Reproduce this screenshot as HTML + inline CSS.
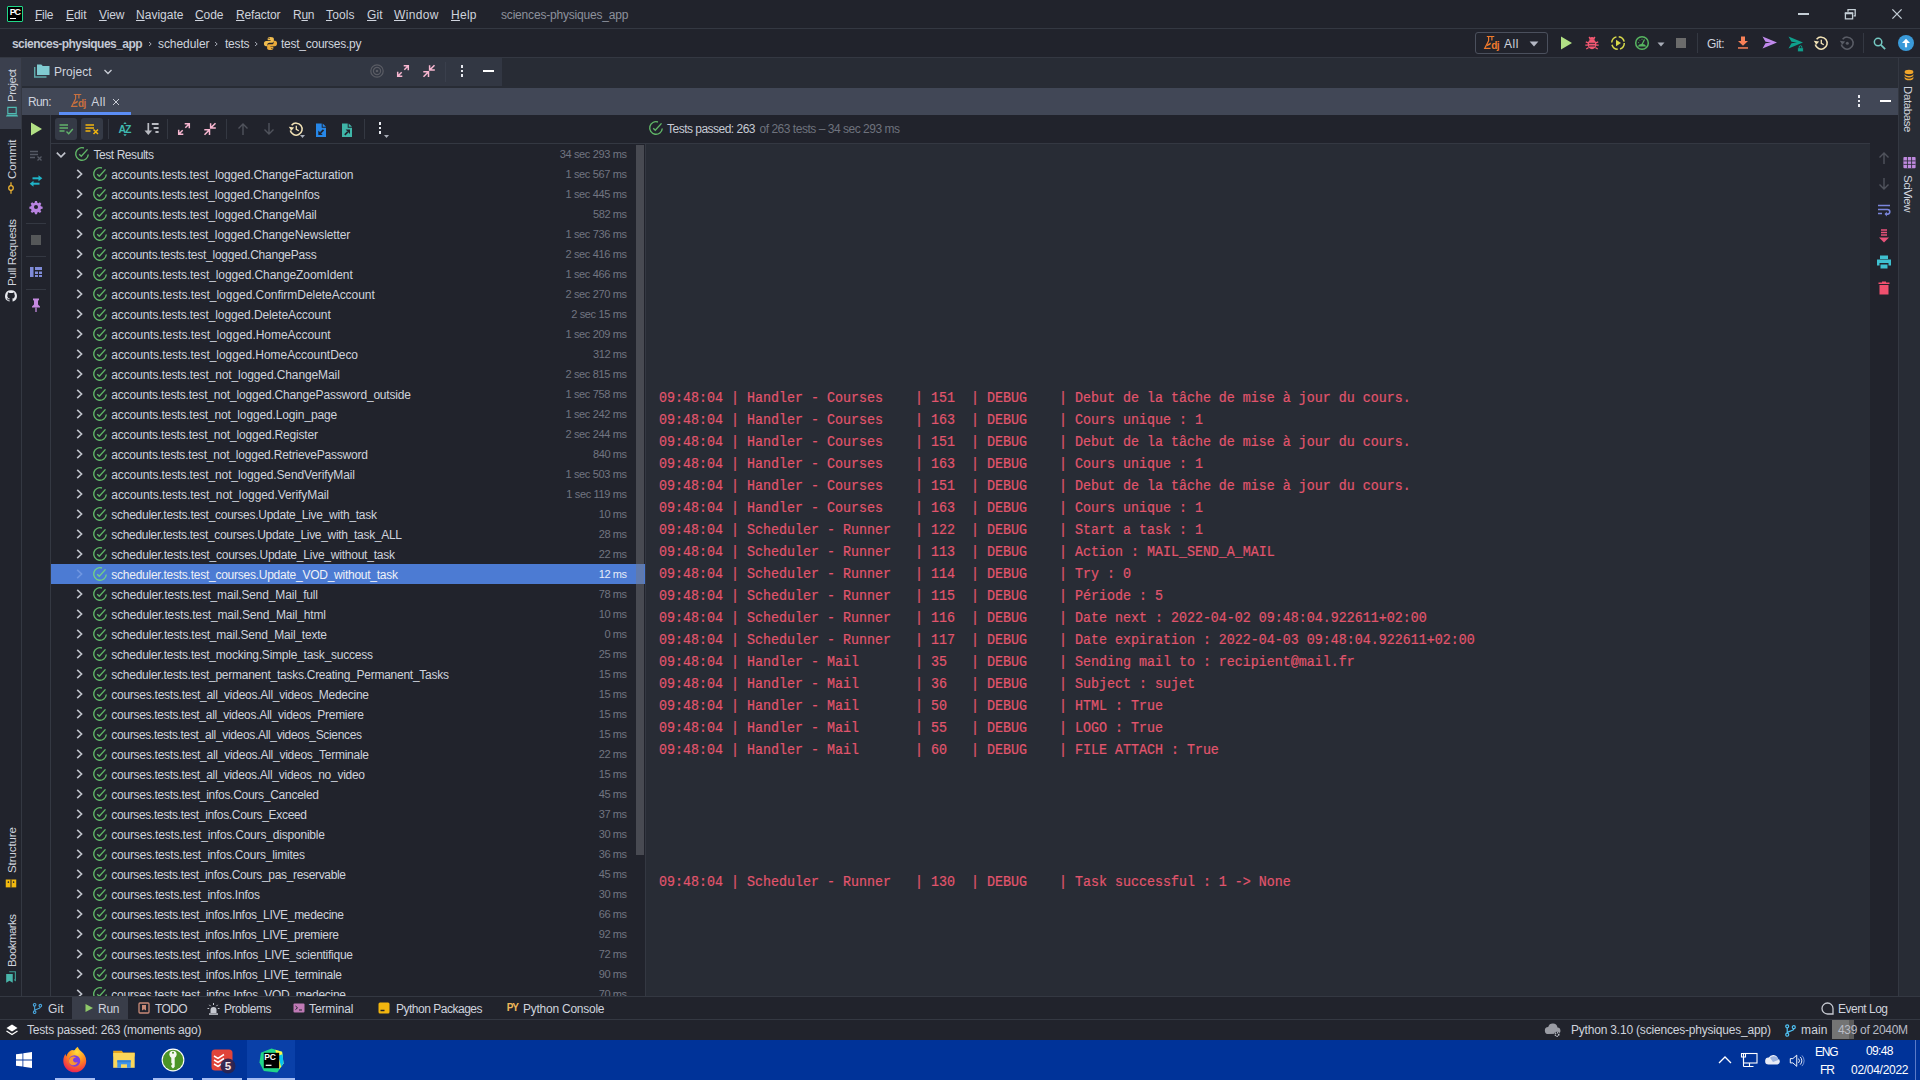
<!DOCTYPE html>
<html lang="en"><head><meta charset="utf-8"><title>sciences-physiques_app</title>
<style>
html,body{margin:0;padding:0;}
body{width:1920px;height:1080px;overflow:hidden;background:#21232c;position:relative;font-family:'Liberation Sans', sans-serif;font-size:12px;}
.t{position:absolute;white-space:pre;line-height:20px;height:20px;}
svg{overflow:visible;}
</style></head>
<body>
<div style="position:absolute;left:0px;top:0px;width:1920px;height:28px;background:#21232c;"></div>
<div style="position:absolute;left:0px;top:28px;width:1920px;height:1px;background:#343842;"></div>
<div style="position:absolute;left:7px;top:6px;width:16px;height:16px;box-sizing:border-box;border:1px solid #21d789;background:#000;border-radius:1px;"></div>
<span class="t" style="top:2.30px;font-size:9px;color:#ffffff;left:9.70px;font-weight:700;letter-spacing:-1.200px;">PC</span>
<div style="position:absolute;left:10px;top:18px;width:5.8px;height:1.1px;background:#ffffff;"></div>
<span class="t" style="top:5.20px;font-size:12px;color:#cfd3dd;left:35.00px;letter-spacing:-0.279px;"><u>F</u>ile</span>
<span class="t" style="top:5.20px;font-size:12px;color:#cfd3dd;left:66.00px;letter-spacing:-0.059px;"><u>E</u>dit</span>
<span class="t" style="top:5.20px;font-size:12px;color:#cfd3dd;left:99.00px;letter-spacing:-0.098px;"><u>V</u>iew</span>
<span class="t" style="top:5.20px;font-size:12px;color:#cfd3dd;left:136.00px;letter-spacing:0.020px;"><u>N</u>avigate</span>
<span class="t" style="top:5.20px;font-size:12px;color:#cfd3dd;left:195.00px;letter-spacing:-0.062px;"><u>C</u>ode</span>
<span class="t" style="top:5.20px;font-size:12px;color:#cfd3dd;left:236.00px;letter-spacing:-0.122px;"><u>R</u>efactor</span>
<span class="t" style="top:5.20px;font-size:12px;color:#cfd3dd;left:293.00px;letter-spacing:-0.257px;">R<u>u</u>n</span>
<span class="t" style="top:5.20px;font-size:12px;color:#cfd3dd;left:326.00px;letter-spacing:0.122px;"><u>T</u>ools</span>
<span class="t" style="top:5.20px;font-size:12px;color:#cfd3dd;left:367.00px;letter-spacing:0.083px;"><u>G</u>it</span>
<span class="t" style="top:5.20px;font-size:12px;color:#cfd3dd;left:394.00px;letter-spacing:0.364px;"><u>W</u>indow</span>
<span class="t" style="top:5.20px;font-size:12px;color:#cfd3dd;left:451.00px;letter-spacing:0.273px;"><u>H</u>elp</span>
<span class="t" style="top:5.20px;font-size:12px;color:#8d919c;left:501.00px;letter-spacing:-0.186px;">sciences-physiques_app</span>
<div style="position:absolute;left:1797.5px;top:12.7px;width:11px;height:2.6px;background:#c4ced6;"></div>
<svg style="position:absolute;left:1844px;top:8px;" width="12" height="12" viewBox="0 0 12 12"><path d="M1.400 5.500h7.200v5.400H1.400zM1.400 5.200h7.200" fill="none" stroke="#c4ced6" stroke-width="1.300"/><path d="M0.800 4.300h8.400v1.600H0.800z" fill="#c4ced6"/><path d="M4 3.800V1.600h7.200v6.200H9.600" fill="none" stroke="#c4ced6" stroke-width="1.300"/></svg>
<svg style="position:absolute;left:1891px;top:8px;" width="12" height="12" viewBox="0 0 12 12"><path d="M1.400 1.400l9.200 9.200M10.600 1.400L1.400 10.600" fill="none" stroke="#c4ced6" stroke-width="1.300"/></svg>
<div style="position:absolute;left:0px;top:29px;width:1920px;height:28px;background:#21232c;"></div>
<div style="position:absolute;left:0px;top:57px;width:1920px;height:1px;background:#343842;"></div>
<span class="t" style="top:34.40px;font-size:12px;color:#c3c8d4;left:12.00px;font-weight:700;letter-spacing:-0.551px;">sciences-physiques_app</span>
<svg style="position:absolute;left:145.5px;top:39.8px;" width="8" height="8" viewBox="0 0 8 8"><path d="M3 2L5.200 4L3 6" fill="none" stroke="#a4a8b3" stroke-width="1"/></svg>
<span class="t" style="top:34.40px;font-size:12px;color:#cfd3dd;left:158.00px;letter-spacing:-0.066px;">scheduler</span>
<svg style="position:absolute;left:211.5px;top:39.8px;" width="8" height="8" viewBox="0 0 8 8"><path d="M3 2L5.200 4L3 6" fill="none" stroke="#a4a8b3" stroke-width="1"/></svg>
<span class="t" style="top:34.40px;font-size:12px;color:#cfd3dd;left:225.00px;letter-spacing:-0.210px;">tests</span>
<svg style="position:absolute;left:251.5px;top:39.8px;" width="8" height="8" viewBox="0 0 8 8"><path d="M3 2L5.200 4L3 6" fill="none" stroke="#a4a8b3" stroke-width="1"/></svg>
<svg style="position:absolute;left:262.5px;top:35.5px;" width="15" height="15" viewBox="0 0 16 16"><path d="M7.9 1C5.9 1 5 1.8 5 3v1.6h3.1v.6H3.4C2 5.2 1 6.2 1 8s.9 2.9 2.2 2.9H4.6V9.2c0-1.2 1-2.1 2.2-2.1h3c1 0 1.8-.8 1.8-1.8V3c0-1.1-.9-2-3.7-2zM6.5 2a.6.6 0 110 1.3.6.6 0 010-1.300z" fill="#f1bd4f"/><path d="M8.100 15c2 0 2.900-.8 2.900-2v-1.600H7.900v-.6h4.700c1.400 0 2.400-1 2.400-2.800s-.9-2.900-2.200-2.900h-1.400v1.700c0 1.200-1 2.100-2.200 2.100h-3c-1 0-1.800.8-1.800 1.800V13c0 1.100.9 2 3.700 2zm1.400-1a.6.6 0 110-1.300.6.6 0 010 1.300z" fill="#e8a93a"/></svg>
<span class="t" style="top:34.40px;font-size:12px;color:#cfd3dd;left:281.00px;letter-spacing:-0.253px;">test_courses.py</span>
<div style="position:absolute;left:1475px;top:32px;width:73px;height:22px;box-sizing:border-box;border:1px solid #4b505d;border-radius:3px;"></div>
<svg style="position:absolute;left:1484px;top:35px;" width="12" height="16" viewBox="0 0 12 16"><path d="M2.800 1.500H10.300M4.600 1.500V5.800L0.700 13.300H6.600M7.900 1.500V5.600" fill="none" stroke="#f07a2c" stroke-width="1.200"/><path d="M3.300 9.200L7.200 7.600L6.300 9.800L2.300 11.600z" fill="#f07a2c"/></svg>
<span class="t" style="top:35.60px;font-size:10px;color:#f07a2c;left:1491.30px;font-weight:700;letter-spacing:-0.687px;">dj</span>
<span class="t" style="top:34.40px;font-size:12px;color:#cfd3dd;left:1504.00px;letter-spacing:0.582px;">All</span>
<svg style="position:absolute;left:1529px;top:38.5px;" width="10" height="10" viewBox="0 0 10 10"><path d="M0.600 2.500h8.800L5 7.500z" fill="#b4b8c4"/></svg>
<svg style="position:absolute;left:1558px;top:35px;" width="16" height="16" viewBox="0 0 16 16"><path d="M3 1.500L14 8L3 14.500z" fill="#b2e085"/></svg>
<svg style="position:absolute;left:1584px;top:35px;" width="16" height="16" viewBox="0 0 16 16"><ellipse cx="8" cy="9.300" rx="4.300" ry="5" fill="#f45872"/><path d="M5.300 4.800a2.700 2.700 0 015.400 0z" fill="#f45872"/><path d="M5 2l1.500 1.800M11 2L9.500 3.800M1.800 6.800l2.500 1M14.200 6.800l-2.500 1M1.300 10.200h2.700M14.700 10.200H12M2.300 14l2.300-1.500M13.700 14l-2.300-1.500" stroke="#f45872" stroke-width="1.300" fill="none"/><path d="M5 8.300h6M5 11h6" stroke="#21232c" stroke-width="0.900"/></svg>
<svg style="position:absolute;left:1610px;top:35px;" width="16" height="16" viewBox="0 0 16 16"><circle cx="8" cy="8" r="6.300" fill="none" stroke="#d6d84a" stroke-width="1.500" stroke-dasharray="7.500 2.400"/><path d="M6 4.800L11 8L6 11.200z" fill="#d6d84a"/></svg>
<svg style="position:absolute;left:1634px;top:35px;" width="16" height="16" viewBox="0 0 16 16"><circle cx="8" cy="8" r="6.300" fill="none" stroke="#57b660" stroke-width="1.500"/><path d="M3.500 11.500a5 5 0 019 0z" fill="#57b660"/><path d="M8 9.500L10.500 4.500" stroke="#57b660" stroke-width="1.300"/><path d="M4.300 7.500l.8.300M8 3.800v.9M5.300 4.800l.6.700" stroke="#57b660" stroke-width="1"/></svg>
<svg style="position:absolute;left:1657px;top:39.5px;" width="8" height="8" viewBox="0 0 8 8"><path d="M0.500 2.500h7L4 6.500z" fill="#a9adb8"/></svg>
<div style="position:absolute;left:1676px;top:38px;width:10px;height:10px;background:#6b6b6b;"></div>
<div style="position:absolute;left:1697px;top:33px;width:1px;height:20px;background:#343842;"></div>
<span class="t" style="top:34.40px;font-size:12px;color:#cfd3dd;left:1707.00px;letter-spacing:-0.389px;">Git:</span>
<svg style="position:absolute;left:1735px;top:35px;" width="16" height="16" viewBox="0 0 16 16"><path d="M6 1.600h4V6h3L8 10.800L3 6h3z" fill="#f88158"/><path d="M3 12.200h10v1.500H3z" fill="#f88158"/></svg>
<svg style="position:absolute;left:1761.75px;top:35.95px;" width="14.5" height="14.5" viewBox="0 0 14.5 14.5"><path d="M0.500 0.500L15 6.500L0.500 12.500L3.500 7.300L9 6.500L3.500 5.700z" fill="#c08aec"/></svg>
<svg style="position:absolute;left:1787.75px;top:35.95px;" width="14.5" height="14.5" viewBox="0 0 14.5 14.5"><path d="M0.500 0.500L15 6.500L0.500 12.500L3.500 7.300L9 6.500L3.500 5.700z" fill="#0fa08c"/></svg>
<svg style="position:absolute;left:1797px;top:44.7px;" width="7" height="7" viewBox="0 0 7 7"><rect x="0.700" y="2.800" width="5.600" height="4" fill="#0fa08c" stroke="#21232c" stroke-width="0.700"/><path d="M2.200 2.800V2a1.300 1.300 0 012.600 0V2.800" fill="none" stroke="#0fa08c" stroke-width="1"/></svg>
<svg style="position:absolute;left:1813px;top:35px;" width="16" height="16" viewBox="0 0 16 16"><path d="M3.600 4.200A6 6 0 112.300 9.500" fill="none" stroke="#f3e3b6" stroke-width="1.500"/><path d="M0.800 5.800L3.300 9.800L6.200 6.400z" fill="#f3e3b6"/><path d="M8.300 4.800V8.300L10.800 9.800" fill="none" stroke="#f3e3b6" stroke-width="1.300"/></svg>
<svg style="position:absolute;left:1839px;top:35px;" width="16" height="16" viewBox="0 0 16 16"><path d="M3.600 4.200A6 6 0 112.300 9.500" fill="none" stroke="#5a5d66" stroke-width="1.500"/><path d="M0.800 5.800L3.300 9.800L6.200 6.400z" fill="#5a5d66"/><circle cx="8.300" cy="8.300" r="1.500" fill="#5a5d66"/></svg>
<div style="position:absolute;left:1863px;top:33px;width:1px;height:20px;background:#343842;"></div>
<svg style="position:absolute;left:1872.3px;top:35.7px;" width="15" height="15" viewBox="0 0 16 16"><circle cx="6.500" cy="6.500" r="4" fill="none" stroke="#74c8c2" stroke-width="1.600"/><path d="M9.500 9.500L14 14" stroke="#74c8c2" stroke-width="1.900"/></svg>
<svg style="position:absolute;left:1898px;top:35px;" width="16" height="16" viewBox="0 0 16 16"><circle cx="8" cy="8" r="8" fill="#3a9ad9"/><path d="M8 12.300V6.500" stroke="#fff" stroke-width="2.200" fill="none"/><path d="M4 8L8 3.800L12 8z" fill="#fff"/></svg>
<div style="position:absolute;left:0px;top:58px;width:21px;height:938px;background:#21232c;"></div>
<div style="position:absolute;left:0px;top:58px;width:21px;height:71px;background:#3b404e;"></div>
<div style="position:absolute;left:21px;top:58px;width:1px;height:938px;background:#343842;"></div>
<span class="t" style="top:101.50px;font-size:11.5px;color:#cfd3dd;left:2.40px;letter-spacing:-0.465px;transform-origin:0 0;transform:rotate(-90deg);">Project</span>
<svg style="position:absolute;left:4.5px;top:105px;" width="14" height="14" viewBox="0 0 16 16"><path d="M3.200 2.700h9.600v7H3.200z" fill="none" stroke="#4fbab2" stroke-width="1.300"/><path d="M2.300 10.800h11.400l1.300 2.200H1z" fill="#4fbab2"/></svg>
<span class="t" style="top:178.50px;font-size:11.5px;color:#cfd3dd;left:2.40px;letter-spacing:-0.022px;transform-origin:0 0;transform:rotate(-90deg);">Commit</span>
<svg style="position:absolute;left:4px;top:181px;" width="14" height="14" viewBox="0 0 16 16"><circle cx="8" cy="8" r="2.600" fill="none" stroke="#f2b632" stroke-width="1.400"/><path d="M8 1.500v4M8 10.500v4" stroke="#f2b632" stroke-width="1.400"/></svg>
<span class="t" style="top:285.50px;font-size:11.5px;color:#cfd3dd;left:2.40px;letter-spacing:-0.330px;transform-origin:0 0;transform:rotate(-90deg);">Pull Requests</span>
<svg style="position:absolute;left:4px;top:289px;" width="14" height="14" viewBox="0 0 16 16"><path d="M8 1.300a6.700 6.700 0 00-2.100 13.100c.35.050.45-.150.450-.350v-1.200c-1.900.400-2.300-.900-2.300-.900-.300-.800-.750-1-.750-1-.600-.400.050-.400.050-.400.700.050 1.050.700 1.050.700.600 1.050 1.600.750 2 .550.050-.450.250-.750.450-.900-1.500-.150-3.050-.750-3.050-3.300 0-.750.250-1.350.700-1.800-.100-.200-.300-.900.050-1.800 0 0 .600-.200 1.850.700a6.400 6.400 0 013.400 0c1.250-.900 1.850-.700 1.850-.700.350.900.150 1.600.050 1.800.450.450.700 1.050.700 1.800 0 2.550-1.550 3.150-3.050 3.300.250.200.450.600.450 1.250v1.850c0 .200.100.400.450.350A6.700 6.700 0 008 1.300z" fill="#e8eaf0"/></svg>
<span class="t" style="top:872.50px;font-size:11.5px;color:#cfd3dd;left:2.40px;letter-spacing:-0.082px;transform-origin:0 0;transform:rotate(-90deg);">Structure</span>
<svg style="position:absolute;left:4px;top:876px;" width="14" height="14" viewBox="0 0 16 16"><path d="M2 4h12v9H2z" fill="#f2b90f"/><path d="M8 4v9" stroke="#21232c" stroke-width="1.200"/><circle cx="5" cy="7" r="0.900" fill="#21232c"/><circle cx="11" cy="7" r="0.900" fill="#21232c"/></svg>
<span class="t" style="top:967.00px;font-size:11.5px;color:#cfd3dd;left:2.40px;letter-spacing:-0.565px;transform-origin:0 0;transform:rotate(-90deg);">Bookmarks</span>
<svg style="position:absolute;left:4px;top:970px;" width="14" height="14" viewBox="0 0 16 16"><path d="M6 2h7v10l-1.500-1" fill="none" stroke="#3e9d94" stroke-width="1.300"/><path d="M2.500 4.500h7.500v10l-3.750-2.300L2.500 14.500z" fill="#49b5aa"/></svg>
<div style="position:absolute;left:1899px;top:58px;width:21px;height:938px;background:#282c35;"></div>
<div style="position:absolute;left:1898px;top:58px;width:1px;height:938px;background:#343842;"></div>
<svg style="position:absolute;left:1902.4px;top:67.7px;" width="14" height="14" viewBox="0 0 16 16"><ellipse cx="8" cy="4.500" rx="5" ry="2.500" fill="#f0a52a"/><path d="M3 6.500c0 1.400 2.200 2.500 5 2.500s5-1.100 5-2.500v1.800c0 1.400-2.200 2.500-5 2.500s-5-1.100-5-2.500zM3 9.800c0 1.400 2.200 2.500 5 2.500s5-1.100 5-2.500v1.800c0 1.400-2.200 2.500-5 2.500s-5-1.100-5-2.500z" fill="#f0a52a"/></svg>
<span class="t" style="top:86.00px;font-size:11.5px;color:#cfd3dd;left:1918.10px;letter-spacing:-0.390px;transform-origin:0 0;transform:rotate(90deg);">Database</span>
<svg style="position:absolute;left:1901.5px;top:155px;" width="15" height="15" viewBox="0 0 16 16"><rect x="1.500" y="2" width="13" height="12" rx="1" fill="#c08ae0"/><path d="M1.500 6.300h13M1.500 10h13M5.800 2v12M10.200 2v12" stroke="#282c35" stroke-width="0.900"/></svg>
<span class="t" style="top:175.00px;font-size:11.5px;color:#cfd3dd;left:1918.10px;letter-spacing:-0.532px;transform-origin:0 0;transform:rotate(90deg);">SciView</span>
<div style="position:absolute;left:22px;top:58px;width:480px;height:28px;background:#323743;"></div>
<div style="position:absolute;left:502px;top:58px;width:1396px;height:28px;background:#282c35;"></div>
<div style="position:absolute;left:22px;top:86px;width:1876px;height:2px;background:#282c35;"></div>
<svg style="position:absolute;left:33px;top:62.5px;" width="17" height="17" viewBox="0 0 17 17"><path d="M4 1.500h4.300l1.500 1.500H16.500v9H4z" fill="#80cbd1"/><path d="M1.700 4V14h11.800" fill="none" stroke="#5fa9ab" stroke-width="1.400"/></svg>
<span class="t" style="top:62.20px;font-size:12px;color:#cfd3dd;left:54.00px;letter-spacing:0.025px;">Project</span>
<svg style="position:absolute;left:103px;top:66.5px;" width="10" height="10" viewBox="0 0 10 10"><path d="M1.500 3L5 6.500L8.500 3" fill="none" stroke="#c9cdd6" stroke-width="1.300"/></svg>
<svg style="position:absolute;left:370px;top:64px;" width="14" height="14" viewBox="0 0 14 14"><circle cx="7" cy="7" r="6.200" fill="none" stroke="#5a5c64" stroke-width="1.200"/><circle cx="7" cy="7" r="3.600" fill="none" stroke="#5a5c64" stroke-width="1.200"/><circle cx="7" cy="7" r="1.300" fill="#5a5c64"/></svg>
<svg style="position:absolute;left:395px;top:63px;" width="16" height="16" viewBox="0 0 16 16"><path d="M8.700 2.700H13.300V7.300M13.300 2.700L9.300 6.700M2.700 8.700V13.300H7.300M2.700 13.300L6.700 9.300" fill="none" stroke="#f7b6d0" stroke-width="1.500"/></svg>
<svg style="position:absolute;left:421px;top:63px;" width="16" height="16" viewBox="0 0 16 16"><path d="M8.600 2.300V7.100H13.800M8.600 7.100L13.500 2.200M2.300 8.750H7.500V14M7.500 8.750L2.500 13.800" fill="none" stroke="#f7b6d0" stroke-width="1.500"/></svg>
<div style="position:absolute;left:445px;top:62px;width:1px;height:20px;background:#3a3f4c;"></div>
<div style="position:absolute;left:460.8px;top:65.3px;width:2.4px;height:2.4px;background:#e8eaf0;"></div>
<div style="position:absolute;left:460.8px;top:69.8px;width:2.4px;height:2.4px;background:#e8eaf0;"></div>
<div style="position:absolute;left:460.8px;top:74.3px;width:2.4px;height:2.4px;background:#e8eaf0;"></div>
<div style="position:absolute;left:482.5px;top:69.8px;width:11px;height:2.4px;background:#ffffff;"></div>
<div style="position:absolute;left:22px;top:88px;width:1876px;height:27px;background:#414756;"></div>
<span class="t" style="top:92.20px;font-size:12px;color:#cfd3dd;left:28.00px;letter-spacing:-0.616px;">Run:</span>
<svg style="position:absolute;left:70.8px;top:93.3px;" width="12" height="16" viewBox="0 0 12 16"><path d="M2.800 1.500H10.300M4.600 1.500V5.800L0.700 13.300H6.600M7.900 1.500V5.600" fill="none" stroke="#c8703f" stroke-width="1.200"/><path d="M3.300 9.200L7.200 7.600L6.300 9.800L2.300 11.600z" fill="#c8703f"/></svg>
<span class="t" style="top:93.90px;font-size:10px;color:#c8703f;left:78.10px;font-weight:700;letter-spacing:-0.687px;">dj</span>
<span class="t" style="top:92.20px;font-size:12px;color:#cfd3dd;left:91.20px;letter-spacing:0.482px;">All</span>
<svg style="position:absolute;left:112px;top:97.5px;" width="8" height="8" viewBox="0 0 8 8"><path d="M1 1l6 6M7 1L1 7" fill="none" stroke="#c9cdd6" stroke-width="1"/></svg>
<div style="position:absolute;left:59px;top:112px;width:72px;height:3px;background:#5b8df5;"></div>
<div style="position:absolute;left:1857.8px;top:95.3px;width:2.4px;height:2.4px;background:#e8eaf0;"></div>
<div style="position:absolute;left:1857.8px;top:99.8px;width:2.4px;height:2.4px;background:#e8eaf0;"></div>
<div style="position:absolute;left:1857.8px;top:104.3px;width:2.4px;height:2.4px;background:#e8eaf0;"></div>
<div style="position:absolute;left:1879.5px;top:99.8px;width:11px;height:2.4px;background:#ffffff;"></div>
<div style="position:absolute;left:22px;top:115px;width:1876px;height:28px;background:#21232c;"></div>
<div style="position:absolute;left:51px;top:143px;width:1819px;height:1px;background:#343842;"></div>
<div style="position:absolute;left:50px;top:115px;width:1px;height:881px;background:#343842;"></div>
<svg style="position:absolute;left:28px;top:121px;" width="16" height="16" viewBox="0 0 16 16"><path d="M3 1.500L14 8L3 14.500z" fill="#b2e085"/></svg>
<svg style="position:absolute;left:28px;top:147px;" width="16" height="16" viewBox="0 0 16 16"><path d="M2 4.500h8M2 7.500h8M2 10.500h5" stroke="#555964" stroke-width="1.300"/><path d="M9.500 9.500l4 4M13.500 9.500l-4 4" stroke="#555964" stroke-width="1.300"/></svg>
<svg style="position:absolute;left:28px;top:173px;" width="16" height="16" viewBox="0 0 16 16"><path d="M4.500 5.300h7" stroke="#1fb4c8" stroke-width="2"/><path d="M10.500 2.300L14.300 5.300L10.500 8.300z" fill="#1fb4c8"/><path d="M11.500 10.700h-7" stroke="#1fb4c8" stroke-width="2"/><path d="M5.500 7.700L1.700 10.700L5.500 13.700z" fill="#1fb4c8"/></svg>
<svg style="position:absolute;left:28px;top:199px;" width="16" height="16" viewBox="0 0 16 16"><path d="M6.800 1h2.400l.4 2 1.300.6 1.700-1.100 1.700 1.700-1.100 1.700.6 1.300 2 .4v2.400l-2 .4-.6 1.300 1.100 1.700-1.700 1.700-1.700-1.100-1.300.6-.4 2H6.800l-.4-2-1.300-.6-1.700 1.100-1.700-1.700 1.100-1.700-.6-1.300-2-.4V7.600l2-.4.600-1.300-1.100-1.700 1.700-1.700 1.700 1.100 1.300-.6zM8 5.600a2.400 2.400 0 100 4.800 2.400 2.400 0 000-4.800z" fill="#b883e0" fill-rule="evenodd" transform="translate(1.200 1.200) scale(0.850)"/></svg>
<div style="position:absolute;left:26px;top:223px;width:20px;height:1px;background:#343842;"></div>
<div style="position:absolute;left:31px;top:235px;width:10px;height:10px;background:#555759;"></div>
<div style="position:absolute;left:26px;top:256px;width:20px;height:1px;background:#343842;"></div>
<svg style="position:absolute;left:28px;top:264px;" width="16" height="16" viewBox="0 0 16 16"><path d="M2 3h3.500v10H2zM7 3h7v3H7zM7 7.500h3v2.500H7zM11 7.500h3v2.500h-3zM7 11h3v2H7zM11 11h3v2h-3z" fill="#7f8bd8"/></svg>
<div style="position:absolute;left:26px;top:289px;width:20px;height:1px;background:#343842;"></div>
<svg style="position:absolute;left:28px;top:297px;" width="16" height="16" viewBox="0 0 16 16"><path d="M5 1.500h6v1.500l-1 .8v3.700l2 2v1H4v-1l2-2V3.800l-1-.8z" fill="#c58ae0"/><path d="M8 10.500v4.500" stroke="#c58ae0" stroke-width="1.300"/></svg>
<div style="position:absolute;left:55px;top:118px;width:22px;height:22px;background:#353a46;border-radius:3px;"></div>
<div style="position:absolute;left:81px;top:118px;width:22px;height:22px;background:#353a46;border-radius:3px;"></div>
<svg style="position:absolute;left:58px;top:121px;" width="16" height="16" viewBox="0 0 16 16"><path d="M1.500 4h8.500M1.500 7h8.500M1.500 10h5" stroke="#62b36b" stroke-width="1.400"/><path d="M8.500 10.500l2.200 2.200L14.800 8" fill="none" stroke="#62b36b" stroke-width="1.400"/></svg>
<svg style="position:absolute;left:84px;top:121px;" width="16" height="16" viewBox="0 0 16 16"><path d="M1.500 4h8.500M1.500 7h8.500M1.500 10h5" stroke="#f2b50f" stroke-width="1.400"/><path d="M9.500 8.500l4.500 4.500M14 8.500L9.500 13" fill="none" stroke="#f2b50f" stroke-width="1.500"/></svg>
<div style="position:absolute;left:108px;top:119px;width:1px;height:20px;background:#343842;"></div>
<span class="t" style="top:119.30px;font-size:10.5px;color:#3fbab0;left:118.60px;font-weight:700;letter-spacing:-1.197px;">AZ</span>
<svg style="position:absolute;left:117.3px;top:121px;" width="16" height="16" viewBox="0 0 16 16"><path d="M6.300 3L8 1L9.700 3zM6.300 13.200L8 15.200L9.700 13.200z" fill="#3fbab0"/></svg>
<svg style="position:absolute;left:143.5px;top:121px;" width="16" height="16" viewBox="0 0 16 16"><path d="M4.300 2v10" fill="none" stroke="#b9bbc2" stroke-width="1.700"/><path d="M0.500 9.500h7.600L4.300 14z" fill="#b9bbc2"/><path d="M7.800 3h6.800M9.600 7h5M11.400 11h3.200" stroke="#b9bbc2" stroke-width="2"/></svg>
<div style="position:absolute;left:167px;top:119px;width:1px;height:20px;background:#343842;"></div>
<svg style="position:absolute;left:176px;top:121px;" width="16" height="16" viewBox="0 0 16 16"><path d="M8.700 2.700H13.300V7.300M13.300 2.700L9.300 6.700M2.700 8.700V13.300H7.300M2.700 13.300L6.700 9.300" fill="none" stroke="#f7b6d0" stroke-width="1.500"/></svg>
<svg style="position:absolute;left:202px;top:121px;" width="16" height="16" viewBox="0 0 16 16"><path d="M8.600 2.300V7.100H13.800M8.600 7.100L13.500 2.200M2.300 8.750H7.500V14M7.500 8.750L2.500 13.800" fill="none" stroke="#f7b6d0" stroke-width="1.500"/></svg>
<div style="position:absolute;left:226px;top:119px;width:1px;height:20px;background:#343842;"></div>
<svg style="position:absolute;left:235px;top:121px;" width="16" height="16" viewBox="0 0 16 16"><path d="M8 14V3M3.500 7.500L8 3l4.500 4.500" fill="none" stroke="#50535c" stroke-width="1.400"/></svg>
<svg style="position:absolute;left:261px;top:121px;" width="16" height="16" viewBox="0 0 16 16"><path d="M8 2v11M3.500 8.500L8 13l4.500-4.500" fill="none" stroke="#50535c" stroke-width="1.400"/></svg>
<svg style="position:absolute;left:287.5px;top:121px;" width="16" height="16" viewBox="0 0 16 16"><path d="M3.600 4.200A6 6 0 112.300 9.500" fill="none" stroke="#f3e3b6" stroke-width="1.500"/><path d="M0.800 5.800L3.300 9.800L6.200 6.400z" fill="#f3e3b6"/><path d="M8.300 4.800V8.300L10.800 9.800" fill="none" stroke="#f3e3b6" stroke-width="1.300"/></svg>
<svg style="position:absolute;left:299.5px;top:133.5px;" width="5" height="5" viewBox="0 0 5 5"><path d="M0 1h5L2.500 4z" fill="#a9adb8"/></svg>
<svg style="position:absolute;left:313px;top:121.5px;" width="16" height="16" viewBox="0 0 16 16"><path d="M3 1.500h5.700v4.300H13v9.200H3z" fill="#2787e8"/><path d="M9.700 1.500L13 4.800H9.700z" fill="#2787e8"/><path d="M10.500 7.800L7.500 10.800" stroke="#21232c" stroke-width="1.700"/><path d="M5.300 8.600V13h4.400z" fill="#21232c"/></svg>
<svg style="position:absolute;left:339px;top:121.5px;" width="16" height="16" viewBox="0 0 16 16"><path d="M3 1.500h5.700v4.300H13v9.200H3z" fill="#3fb5a8"/><path d="M9.700 1.500L13 4.800H9.700z" fill="#3fb5a8"/><path d="M5.800 12.800L8.800 9.800" stroke="#21232c" stroke-width="1.700"/><path d="M6.600 7.600H11V12z" fill="#21232c"/></svg>
<div style="position:absolute;left:364px;top:119px;width:1px;height:20px;background:#343842;"></div>
<div style="position:absolute;left:378.8px;top:122.3px;width:2.4px;height:2.4px;background:#e8eaf0;"></div>
<div style="position:absolute;left:378.8px;top:126.8px;width:2.4px;height:2.4px;background:#e8eaf0;"></div>
<div style="position:absolute;left:378.8px;top:131.3px;width:2.4px;height:2.4px;background:#e8eaf0;"></div>
<svg style="position:absolute;left:383.5px;top:133.5px;" width="5" height="5" viewBox="0 0 5 5"><path d="M0 1h5L2.500 4z" fill="#a9adb8"/></svg>
<svg style="position:absolute;left:648px;top:120px;" width="16" height="16" viewBox="0 0 16 16"><path d="M14.280 8.550A6.300 6.300 0 119.950 2" fill="none" stroke="#60b667" stroke-width="1.400"/><path d="M5.200 8.200L7.300 10.300L13.500 3.400" fill="none" stroke="#60b667" stroke-width="1.400"/></svg>
<span class="t" style="top:119.20px;font-size:12px;color:#c6cad4;left:667.00px;letter-spacing:-0.514px;">Tests passed: 263</span>
<span class="t" style="top:119.20px;font-size:12px;color:#6e727d;left:759.50px;letter-spacing:-0.479px;">of 263 tests – 34 sec 293 ms</span>
<div style="position:absolute;left:1870px;top:143px;width:28px;height:853px;background:#21232c;"></div>
<div style="position:absolute;left:1869px;top:143px;width:1px;height:853px;background:#343842;"></div>
<svg style="position:absolute;left:1876px;top:150px;" width="16" height="16" viewBox="0 0 16 16"><path d="M8 14V3M3.500 7.500L8 3l4.500 4.500" fill="none" stroke="#50535c" stroke-width="1.400"/></svg>
<svg style="position:absolute;left:1876px;top:176px;" width="16" height="16" viewBox="0 0 16 16"><path d="M8 2v11M3.500 8.500L8 13l4.500-4.500" fill="none" stroke="#50535c" stroke-width="1.400"/></svg>
<svg style="position:absolute;left:1876px;top:202px;" width="16" height="16" viewBox="0 0 16 16"><path d="M2 3.500h12M2 7.500h9.500a2.300 2.300 0 010 4.600H10M2 11.500h4" fill="none" stroke="#7b86dc" stroke-width="1.600"/><path d="M10.800 9.800L8.500 12.100l2.300 2.300z" fill="#7b86dc"/></svg>
<svg style="position:absolute;left:1876px;top:228px;" width="16" height="16" viewBox="0 0 16 16"><path d="M5 2h6M5 4.500h6M5 7h6" stroke="#e8527a" stroke-width="1.300"/><path d="M3 9.500h10L8 14.500z" fill="#e8527a"/></svg>
<svg style="position:absolute;left:1876px;top:254px;" width="16" height="16" viewBox="0 0 16 16"><path d="M4 1.500h8V5H4z" fill="#3fc0d0"/><path d="M1 5.500h14v6h-2.500V9h-9v2.500H1z" fill="#3fc0d0"/><path d="M4.500 10.500h7v4h-7z" fill="#3fc0d0"/></svg>
<svg style="position:absolute;left:1876px;top:280px;" width="16" height="16" viewBox="0 0 16 16"><path d="M3.500 5h9v9.500h-9z" fill="#f0506e"/><path d="M2.500 2.500h11v1.500h-11zM6 1.500h4v1H6z" fill="#f0506e"/></svg>
<div style="position:absolute;left:51px;top:144px;width:594px;height:852px;background:#21232c;"></div>
<div style="position:absolute;left:51px;top:144px;width:594px;height:852px;overflow:hidden;">
<svg style="position:absolute;left:4px;top:4.5px;" width="12" height="12" viewBox="0 0 12 12"><path d="M1.800 3.600L6 7.800L10.200 3.600" fill="none" stroke="#c0c3cc" stroke-width="1.600"/></svg>
<svg style="position:absolute;left:23px;top:2px;" width="16" height="16" viewBox="0 0 16 16"><path d="M14.280 8.550A6.300 6.300 0 119.950 2" fill="none" stroke="#60b667" stroke-width="1.400"/><path d="M5.200 8.200L7.300 10.300L13.500 3.400" fill="none" stroke="#60b667" stroke-width="1.400"/></svg>
<span class="t" style="top:1.20px;font-size:12px;color:#cfd3dd;left:42.50px;letter-spacing:-0.441px;">Test Results</span>
<span class="t" style="top:-0.00px;font-size:11px;color:#717581;left:508.75px;letter-spacing:-0.358px;">34 sec 293 ms</span>
<svg style="position:absolute;left:22.5px;top:24px;" width="12" height="12" viewBox="0 0 12 12"><path d="M3.200 1.800L7.600 6L3.200 10.200" fill="none" stroke="#c0c3cc" stroke-width="1.600"/></svg>
<svg style="position:absolute;left:41px;top:22px;" width="16" height="16" viewBox="0 0 16 16"><path d="M14.280 8.550A6.300 6.300 0 119.950 2" fill="none" stroke="#60b667" stroke-width="1.400"/><path d="M5.200 8.200L7.300 10.300L13.500 3.400" fill="none" stroke="#60b667" stroke-width="1.400"/></svg>
<span class="t" style="top:21.10px;font-size:12px;color:#cfd3dd;left:60.30px;letter-spacing:-0.123px;">accounts.tests.test_logged.ChangeFacturation</span>
<span class="t" style="top:20.00px;font-size:11px;color:#717581;left:514.51px;letter-spacing:-0.357px;">1 sec 567 ms</span>
<svg style="position:absolute;left:22.5px;top:44px;" width="12" height="12" viewBox="0 0 12 12"><path d="M3.200 1.800L7.600 6L3.200 10.200" fill="none" stroke="#c0c3cc" stroke-width="1.600"/></svg>
<svg style="position:absolute;left:41px;top:42px;" width="16" height="16" viewBox="0 0 16 16"><path d="M14.280 8.550A6.300 6.300 0 119.950 2" fill="none" stroke="#60b667" stroke-width="1.400"/><path d="M5.200 8.200L7.300 10.300L13.500 3.400" fill="none" stroke="#60b667" stroke-width="1.400"/></svg>
<span class="t" style="top:41.10px;font-size:12px;color:#cfd3dd;left:60.30px;letter-spacing:-0.134px;">accounts.tests.test_logged.ChangeInfos</span>
<span class="t" style="top:40.00px;font-size:11px;color:#717581;left:514.51px;letter-spacing:-0.357px;">1 sec 445 ms</span>
<svg style="position:absolute;left:22.5px;top:64px;" width="12" height="12" viewBox="0 0 12 12"><path d="M3.200 1.800L7.600 6L3.200 10.200" fill="none" stroke="#c0c3cc" stroke-width="1.600"/></svg>
<svg style="position:absolute;left:41px;top:62px;" width="16" height="16" viewBox="0 0 16 16"><path d="M14.280 8.550A6.300 6.300 0 119.950 2" fill="none" stroke="#60b667" stroke-width="1.400"/><path d="M5.200 8.200L7.300 10.300L13.500 3.400" fill="none" stroke="#60b667" stroke-width="1.400"/></svg>
<span class="t" style="top:61.10px;font-size:12px;color:#cfd3dd;left:60.30px;letter-spacing:-0.113px;">accounts.tests.test_logged.ChangeMail</span>
<span class="t" style="top:60.00px;font-size:11px;color:#717581;left:542.09px;letter-spacing:-0.433px;">582 ms</span>
<svg style="position:absolute;left:22.5px;top:84px;" width="12" height="12" viewBox="0 0 12 12"><path d="M3.200 1.800L7.600 6L3.200 10.200" fill="none" stroke="#c0c3cc" stroke-width="1.600"/></svg>
<svg style="position:absolute;left:41px;top:82px;" width="16" height="16" viewBox="0 0 16 16"><path d="M14.280 8.550A6.300 6.300 0 119.950 2" fill="none" stroke="#60b667" stroke-width="1.400"/><path d="M5.200 8.200L7.300 10.300L13.500 3.400" fill="none" stroke="#60b667" stroke-width="1.400"/></svg>
<span class="t" style="top:81.10px;font-size:12px;color:#cfd3dd;left:60.30px;letter-spacing:-0.125px;">accounts.tests.test_logged.ChangeNewsletter</span>
<span class="t" style="top:80.00px;font-size:11px;color:#717581;left:514.51px;letter-spacing:-0.357px;">1 sec 736 ms</span>
<svg style="position:absolute;left:22.5px;top:104px;" width="12" height="12" viewBox="0 0 12 12"><path d="M3.200 1.800L7.600 6L3.200 10.200" fill="none" stroke="#c0c3cc" stroke-width="1.600"/></svg>
<svg style="position:absolute;left:41px;top:102px;" width="16" height="16" viewBox="0 0 16 16"><path d="M14.280 8.550A6.300 6.300 0 119.950 2" fill="none" stroke="#60b667" stroke-width="1.400"/><path d="M5.200 8.200L7.300 10.300L13.500 3.400" fill="none" stroke="#60b667" stroke-width="1.400"/></svg>
<span class="t" style="top:101.10px;font-size:12px;color:#cfd3dd;left:60.30px;letter-spacing:-0.243px;">accounts.tests.test_logged.ChangePass</span>
<span class="t" style="top:100.00px;font-size:11px;color:#717581;left:514.51px;letter-spacing:-0.357px;">2 sec 416 ms</span>
<svg style="position:absolute;left:22.5px;top:124px;" width="12" height="12" viewBox="0 0 12 12"><path d="M3.200 1.800L7.600 6L3.200 10.200" fill="none" stroke="#c0c3cc" stroke-width="1.600"/></svg>
<svg style="position:absolute;left:41px;top:122px;" width="16" height="16" viewBox="0 0 16 16"><path d="M14.280 8.550A6.300 6.300 0 119.950 2" fill="none" stroke="#60b667" stroke-width="1.400"/><path d="M5.200 8.200L7.300 10.300L13.500 3.400" fill="none" stroke="#60b667" stroke-width="1.400"/></svg>
<span class="t" style="top:121.10px;font-size:12px;color:#cfd3dd;left:60.30px;letter-spacing:-0.081px;">accounts.tests.test_logged.ChangeZoomIdent</span>
<span class="t" style="top:120.00px;font-size:11px;color:#717581;left:514.51px;letter-spacing:-0.357px;">1 sec 466 ms</span>
<svg style="position:absolute;left:22.5px;top:144px;" width="12" height="12" viewBox="0 0 12 12"><path d="M3.200 1.800L7.600 6L3.200 10.200" fill="none" stroke="#c0c3cc" stroke-width="1.600"/></svg>
<svg style="position:absolute;left:41px;top:142px;" width="16" height="16" viewBox="0 0 16 16"><path d="M14.280 8.550A6.300 6.300 0 119.950 2" fill="none" stroke="#60b667" stroke-width="1.400"/><path d="M5.200 8.200L7.300 10.300L13.500 3.400" fill="none" stroke="#60b667" stroke-width="1.400"/></svg>
<span class="t" style="top:141.10px;font-size:12px;color:#cfd3dd;left:60.30px;letter-spacing:-0.043px;">accounts.tests.test_logged.ConfirmDeleteAccount</span>
<span class="t" style="top:140.00px;font-size:11px;color:#717581;left:514.51px;letter-spacing:-0.357px;">2 sec 270 ms</span>
<svg style="position:absolute;left:22.5px;top:164px;" width="12" height="12" viewBox="0 0 12 12"><path d="M3.200 1.800L7.600 6L3.200 10.200" fill="none" stroke="#c0c3cc" stroke-width="1.600"/></svg>
<svg style="position:absolute;left:41px;top:162px;" width="16" height="16" viewBox="0 0 16 16"><path d="M14.280 8.550A6.300 6.300 0 119.950 2" fill="none" stroke="#60b667" stroke-width="1.400"/><path d="M5.200 8.200L7.300 10.300L13.500 3.400" fill="none" stroke="#60b667" stroke-width="1.400"/></svg>
<span class="t" style="top:161.10px;font-size:12px;color:#cfd3dd;left:60.30px;letter-spacing:-0.104px;">accounts.tests.test_logged.DeleteAccount</span>
<span class="t" style="top:160.00px;font-size:11px;color:#717581;left:520.26px;letter-spacing:-0.356px;">2 sec 15 ms</span>
<svg style="position:absolute;left:22.5px;top:184px;" width="12" height="12" viewBox="0 0 12 12"><path d="M3.200 1.800L7.600 6L3.200 10.200" fill="none" stroke="#c0c3cc" stroke-width="1.600"/></svg>
<svg style="position:absolute;left:41px;top:182px;" width="16" height="16" viewBox="0 0 16 16"><path d="M14.280 8.550A6.300 6.300 0 119.950 2" fill="none" stroke="#60b667" stroke-width="1.400"/><path d="M5.200 8.200L7.300 10.300L13.500 3.400" fill="none" stroke="#60b667" stroke-width="1.400"/></svg>
<span class="t" style="top:181.10px;font-size:12px;color:#cfd3dd;left:60.30px;letter-spacing:-0.038px;">accounts.tests.test_logged.HomeAccount</span>
<span class="t" style="top:180.00px;font-size:11px;color:#717581;left:514.51px;letter-spacing:-0.357px;">1 sec 209 ms</span>
<svg style="position:absolute;left:22.5px;top:204px;" width="12" height="12" viewBox="0 0 12 12"><path d="M3.200 1.800L7.600 6L3.200 10.200" fill="none" stroke="#c0c3cc" stroke-width="1.600"/></svg>
<svg style="position:absolute;left:41px;top:202px;" width="16" height="16" viewBox="0 0 16 16"><path d="M14.280 8.550A6.300 6.300 0 119.950 2" fill="none" stroke="#60b667" stroke-width="1.400"/><path d="M5.200 8.200L7.300 10.300L13.500 3.400" fill="none" stroke="#60b667" stroke-width="1.400"/></svg>
<span class="t" style="top:201.10px;font-size:12px;color:#cfd3dd;left:60.30px;letter-spacing:-0.051px;">accounts.tests.test_logged.HomeAccountDeco</span>
<span class="t" style="top:200.00px;font-size:11px;color:#717581;left:542.09px;letter-spacing:-0.433px;">312 ms</span>
<svg style="position:absolute;left:22.5px;top:224px;" width="12" height="12" viewBox="0 0 12 12"><path d="M3.200 1.800L7.600 6L3.200 10.200" fill="none" stroke="#c0c3cc" stroke-width="1.600"/></svg>
<svg style="position:absolute;left:41px;top:222px;" width="16" height="16" viewBox="0 0 16 16"><path d="M14.280 8.550A6.300 6.300 0 119.950 2" fill="none" stroke="#60b667" stroke-width="1.400"/><path d="M5.200 8.200L7.300 10.300L13.500 3.400" fill="none" stroke="#60b667" stroke-width="1.400"/></svg>
<span class="t" style="top:221.10px;font-size:12px;color:#cfd3dd;left:60.30px;letter-spacing:-0.108px;">accounts.tests.test_not_logged.ChangeMail</span>
<span class="t" style="top:220.00px;font-size:11px;color:#717581;left:514.51px;letter-spacing:-0.357px;">2 sec 815 ms</span>
<svg style="position:absolute;left:22.5px;top:244px;" width="12" height="12" viewBox="0 0 12 12"><path d="M3.200 1.800L7.600 6L3.200 10.200" fill="none" stroke="#c0c3cc" stroke-width="1.600"/></svg>
<svg style="position:absolute;left:41px;top:242px;" width="16" height="16" viewBox="0 0 16 16"><path d="M14.280 8.550A6.300 6.300 0 119.950 2" fill="none" stroke="#60b667" stroke-width="1.400"/><path d="M5.200 8.200L7.300 10.300L13.500 3.400" fill="none" stroke="#60b667" stroke-width="1.400"/></svg>
<span class="t" style="top:241.10px;font-size:12px;color:#cfd3dd;left:60.30px;letter-spacing:-0.176px;">accounts.tests.test_not_logged.ChangePassword_outside</span>
<span class="t" style="top:240.00px;font-size:11px;color:#717581;left:514.51px;letter-spacing:-0.357px;">1 sec 758 ms</span>
<svg style="position:absolute;left:22.5px;top:264px;" width="12" height="12" viewBox="0 0 12 12"><path d="M3.200 1.800L7.600 6L3.200 10.200" fill="none" stroke="#c0c3cc" stroke-width="1.600"/></svg>
<svg style="position:absolute;left:41px;top:262px;" width="16" height="16" viewBox="0 0 16 16"><path d="M14.280 8.550A6.300 6.300 0 119.950 2" fill="none" stroke="#60b667" stroke-width="1.400"/><path d="M5.200 8.200L7.300 10.300L13.500 3.400" fill="none" stroke="#60b667" stroke-width="1.400"/></svg>
<span class="t" style="top:261.10px;font-size:12px;color:#cfd3dd;left:60.30px;letter-spacing:-0.140px;">accounts.tests.test_not_logged.Login_page</span>
<span class="t" style="top:260.00px;font-size:11px;color:#717581;left:514.51px;letter-spacing:-0.357px;">1 sec 242 ms</span>
<svg style="position:absolute;left:22.5px;top:284px;" width="12" height="12" viewBox="0 0 12 12"><path d="M3.200 1.800L7.600 6L3.200 10.200" fill="none" stroke="#c0c3cc" stroke-width="1.600"/></svg>
<svg style="position:absolute;left:41px;top:282px;" width="16" height="16" viewBox="0 0 16 16"><path d="M14.280 8.550A6.300 6.300 0 119.950 2" fill="none" stroke="#60b667" stroke-width="1.400"/><path d="M5.200 8.200L7.300 10.300L13.500 3.400" fill="none" stroke="#60b667" stroke-width="1.400"/></svg>
<span class="t" style="top:281.10px;font-size:12px;color:#cfd3dd;left:60.30px;letter-spacing:-0.178px;">accounts.tests.test_not_logged.Register</span>
<span class="t" style="top:280.00px;font-size:11px;color:#717581;left:514.51px;letter-spacing:-0.357px;">2 sec 244 ms</span>
<svg style="position:absolute;left:22.5px;top:304px;" width="12" height="12" viewBox="0 0 12 12"><path d="M3.200 1.800L7.600 6L3.200 10.200" fill="none" stroke="#c0c3cc" stroke-width="1.600"/></svg>
<svg style="position:absolute;left:41px;top:302px;" width="16" height="16" viewBox="0 0 16 16"><path d="M14.280 8.550A6.300 6.300 0 119.950 2" fill="none" stroke="#60b667" stroke-width="1.400"/><path d="M5.200 8.200L7.300 10.300L13.500 3.400" fill="none" stroke="#60b667" stroke-width="1.400"/></svg>
<span class="t" style="top:301.10px;font-size:12px;color:#cfd3dd;left:60.30px;letter-spacing:-0.205px;">accounts.tests.test_not_logged.RetrievePassword</span>
<span class="t" style="top:300.00px;font-size:11px;color:#717581;left:542.09px;letter-spacing:-0.433px;">840 ms</span>
<svg style="position:absolute;left:22.5px;top:324px;" width="12" height="12" viewBox="0 0 12 12"><path d="M3.200 1.800L7.600 6L3.200 10.200" fill="none" stroke="#c0c3cc" stroke-width="1.600"/></svg>
<svg style="position:absolute;left:41px;top:322px;" width="16" height="16" viewBox="0 0 16 16"><path d="M14.280 8.550A6.300 6.300 0 119.950 2" fill="none" stroke="#60b667" stroke-width="1.400"/><path d="M5.200 8.200L7.300 10.300L13.500 3.400" fill="none" stroke="#60b667" stroke-width="1.400"/></svg>
<span class="t" style="top:321.10px;font-size:12px;color:#cfd3dd;left:60.30px;letter-spacing:-0.116px;">accounts.tests.test_not_logged.SendVerifyMail</span>
<span class="t" style="top:320.00px;font-size:11px;color:#717581;left:514.51px;letter-spacing:-0.357px;">1 sec 503 ms</span>
<svg style="position:absolute;left:22.5px;top:344px;" width="12" height="12" viewBox="0 0 12 12"><path d="M3.200 1.800L7.600 6L3.200 10.200" fill="none" stroke="#c0c3cc" stroke-width="1.600"/></svg>
<svg style="position:absolute;left:41px;top:342px;" width="16" height="16" viewBox="0 0 16 16"><path d="M14.280 8.550A6.300 6.300 0 119.950 2" fill="none" stroke="#60b667" stroke-width="1.400"/><path d="M5.200 8.200L7.300 10.300L13.500 3.400" fill="none" stroke="#60b667" stroke-width="1.400"/></svg>
<span class="t" style="top:341.10px;font-size:12px;color:#cfd3dd;left:60.30px;letter-spacing:-0.077px;">accounts.tests.test_not_logged.VerifyMail</span>
<span class="t" style="top:340.00px;font-size:11px;color:#717581;left:515.27px;letter-spacing:-0.352px;">1 sec 119 ms</span>
<svg style="position:absolute;left:22.5px;top:364px;" width="12" height="12" viewBox="0 0 12 12"><path d="M3.200 1.800L7.600 6L3.200 10.200" fill="none" stroke="#c0c3cc" stroke-width="1.600"/></svg>
<svg style="position:absolute;left:41px;top:362px;" width="16" height="16" viewBox="0 0 16 16"><path d="M14.280 8.550A6.300 6.300 0 119.950 2" fill="none" stroke="#60b667" stroke-width="1.400"/><path d="M5.200 8.200L7.300 10.300L13.500 3.400" fill="none" stroke="#60b667" stroke-width="1.400"/></svg>
<span class="t" style="top:361.10px;font-size:12px;color:#cfd3dd;left:60.30px;letter-spacing:-0.268px;">scheduler.tests.test_courses.Update_Live_with_task</span>
<span class="t" style="top:360.00px;font-size:11px;color:#717581;left:547.84px;letter-spacing:-0.449px;">10 ms</span>
<svg style="position:absolute;left:22.5px;top:384px;" width="12" height="12" viewBox="0 0 12 12"><path d="M3.200 1.800L7.600 6L3.200 10.200" fill="none" stroke="#c0c3cc" stroke-width="1.600"/></svg>
<svg style="position:absolute;left:41px;top:382px;" width="16" height="16" viewBox="0 0 16 16"><path d="M14.280 8.550A6.300 6.300 0 119.950 2" fill="none" stroke="#60b667" stroke-width="1.400"/><path d="M5.200 8.200L7.300 10.300L13.500 3.400" fill="none" stroke="#60b667" stroke-width="1.400"/></svg>
<span class="t" style="top:381.10px;font-size:12px;color:#cfd3dd;left:60.30px;letter-spacing:-0.305px;">scheduler.tests.test_courses.Update_Live_with_task_ALL</span>
<span class="t" style="top:380.00px;font-size:11px;color:#717581;left:547.84px;letter-spacing:-0.449px;">28 ms</span>
<svg style="position:absolute;left:22.5px;top:404px;" width="12" height="12" viewBox="0 0 12 12"><path d="M3.200 1.800L7.600 6L3.200 10.200" fill="none" stroke="#c0c3cc" stroke-width="1.600"/></svg>
<svg style="position:absolute;left:41px;top:402px;" width="16" height="16" viewBox="0 0 16 16"><path d="M14.280 8.550A6.300 6.300 0 119.950 2" fill="none" stroke="#60b667" stroke-width="1.400"/><path d="M5.200 8.200L7.300 10.300L13.500 3.400" fill="none" stroke="#60b667" stroke-width="1.400"/></svg>
<span class="t" style="top:401.10px;font-size:12px;color:#cfd3dd;left:60.30px;letter-spacing:-0.227px;">scheduler.tests.test_courses.Update_Live_without_task</span>
<span class="t" style="top:400.00px;font-size:11px;color:#717581;left:547.84px;letter-spacing:-0.449px;">22 ms</span>
<div style="position:absolute;left:0px;top:420px;width:594px;height:20px;background:#4c7bd3;"></div>
<svg style="position:absolute;left:22.5px;top:424px;" width="12" height="12" viewBox="0 0 12 12"><path d="M3.200 1.800L7.600 6L3.200 10.200" fill="none" stroke="#6f96e0" stroke-width="1.600"/></svg>
<svg style="position:absolute;left:41px;top:422px;" width="16" height="16" viewBox="0 0 16 16"><path d="M14.280 8.550A6.300 6.300 0 119.950 2" fill="none" stroke="#6fd08a" stroke-width="1.400"/><path d="M5.200 8.200L7.300 10.300L13.500 3.400" fill="none" stroke="#6fd08a" stroke-width="1.400"/></svg>
<span class="t" style="top:421.10px;font-size:12px;color:#eef1f8;left:60.30px;letter-spacing:-0.251px;">scheduler.tests.test_courses.Update_VOD_without_task</span>
<span class="t" style="top:420.00px;font-size:11px;color:#e6ecfa;left:547.84px;letter-spacing:-0.449px;">12 ms</span>
<svg style="position:absolute;left:22.5px;top:444px;" width="12" height="12" viewBox="0 0 12 12"><path d="M3.200 1.800L7.600 6L3.200 10.200" fill="none" stroke="#c0c3cc" stroke-width="1.600"/></svg>
<svg style="position:absolute;left:41px;top:442px;" width="16" height="16" viewBox="0 0 16 16"><path d="M14.280 8.550A6.300 6.300 0 119.950 2" fill="none" stroke="#60b667" stroke-width="1.400"/><path d="M5.200 8.200L7.300 10.300L13.500 3.400" fill="none" stroke="#60b667" stroke-width="1.400"/></svg>
<span class="t" style="top:441.10px;font-size:12px;color:#cfd3dd;left:60.30px;letter-spacing:-0.173px;">scheduler.tests.test_mail.Send_Mail_full</span>
<span class="t" style="top:440.00px;font-size:11px;color:#717581;left:547.84px;letter-spacing:-0.449px;">78 ms</span>
<svg style="position:absolute;left:22.5px;top:464px;" width="12" height="12" viewBox="0 0 12 12"><path d="M3.200 1.800L7.600 6L3.200 10.200" fill="none" stroke="#c0c3cc" stroke-width="1.600"/></svg>
<svg style="position:absolute;left:41px;top:462px;" width="16" height="16" viewBox="0 0 16 16"><path d="M14.280 8.550A6.300 6.300 0 119.950 2" fill="none" stroke="#60b667" stroke-width="1.400"/><path d="M5.200 8.200L7.300 10.300L13.500 3.400" fill="none" stroke="#60b667" stroke-width="1.400"/></svg>
<span class="t" style="top:461.10px;font-size:12px;color:#cfd3dd;left:60.30px;letter-spacing:-0.156px;">scheduler.tests.test_mail.Send_Mail_html</span>
<span class="t" style="top:460.00px;font-size:11px;color:#717581;left:547.84px;letter-spacing:-0.449px;">10 ms</span>
<svg style="position:absolute;left:22.5px;top:484px;" width="12" height="12" viewBox="0 0 12 12"><path d="M3.200 1.800L7.600 6L3.200 10.200" fill="none" stroke="#c0c3cc" stroke-width="1.600"/></svg>
<svg style="position:absolute;left:41px;top:482px;" width="16" height="16" viewBox="0 0 16 16"><path d="M14.280 8.550A6.300 6.300 0 119.950 2" fill="none" stroke="#60b667" stroke-width="1.400"/><path d="M5.200 8.200L7.300 10.300L13.500 3.400" fill="none" stroke="#60b667" stroke-width="1.400"/></svg>
<span class="t" style="top:481.10px;font-size:12px;color:#cfd3dd;left:60.30px;letter-spacing:-0.211px;">scheduler.tests.test_mail.Send_Mail_texte</span>
<span class="t" style="top:480.00px;font-size:11px;color:#717581;left:553.59px;letter-spacing:-0.477px;">0 ms</span>
<svg style="position:absolute;left:22.5px;top:504px;" width="12" height="12" viewBox="0 0 12 12"><path d="M3.200 1.800L7.600 6L3.200 10.200" fill="none" stroke="#c0c3cc" stroke-width="1.600"/></svg>
<svg style="position:absolute;left:41px;top:502px;" width="16" height="16" viewBox="0 0 16 16"><path d="M14.280 8.550A6.300 6.300 0 119.950 2" fill="none" stroke="#60b667" stroke-width="1.400"/><path d="M5.200 8.200L7.300 10.300L13.500 3.400" fill="none" stroke="#60b667" stroke-width="1.400"/></svg>
<span class="t" style="top:501.10px;font-size:12px;color:#cfd3dd;left:60.30px;letter-spacing:-0.236px;">scheduler.tests.test_mocking.Simple_task_success</span>
<span class="t" style="top:500.00px;font-size:11px;color:#717581;left:547.84px;letter-spacing:-0.449px;">25 ms</span>
<svg style="position:absolute;left:22.5px;top:524px;" width="12" height="12" viewBox="0 0 12 12"><path d="M3.200 1.800L7.600 6L3.200 10.200" fill="none" stroke="#c0c3cc" stroke-width="1.600"/></svg>
<svg style="position:absolute;left:41px;top:522px;" width="16" height="16" viewBox="0 0 16 16"><path d="M14.280 8.550A6.300 6.300 0 119.950 2" fill="none" stroke="#60b667" stroke-width="1.400"/><path d="M5.200 8.200L7.300 10.300L13.500 3.400" fill="none" stroke="#60b667" stroke-width="1.400"/></svg>
<span class="t" style="top:521.10px;font-size:12px;color:#cfd3dd;left:60.30px;letter-spacing:-0.253px;">scheduler.tests.test_permanent_tasks.Creating_Permanent_Tasks</span>
<span class="t" style="top:520.00px;font-size:11px;color:#717581;left:547.84px;letter-spacing:-0.449px;">15 ms</span>
<svg style="position:absolute;left:22.5px;top:544px;" width="12" height="12" viewBox="0 0 12 12"><path d="M3.200 1.800L7.600 6L3.200 10.200" fill="none" stroke="#c0c3cc" stroke-width="1.600"/></svg>
<svg style="position:absolute;left:41px;top:542px;" width="16" height="16" viewBox="0 0 16 16"><path d="M14.280 8.550A6.300 6.300 0 119.950 2" fill="none" stroke="#60b667" stroke-width="1.400"/><path d="M5.200 8.200L7.300 10.300L13.500 3.400" fill="none" stroke="#60b667" stroke-width="1.400"/></svg>
<span class="t" style="top:541.10px;font-size:12px;color:#cfd3dd;left:60.30px;letter-spacing:-0.259px;">courses.tests.test_all_videos.All_videos_Medecine</span>
<span class="t" style="top:540.00px;font-size:11px;color:#717581;left:547.84px;letter-spacing:-0.449px;">15 ms</span>
<svg style="position:absolute;left:22.5px;top:564px;" width="12" height="12" viewBox="0 0 12 12"><path d="M3.200 1.800L7.600 6L3.200 10.200" fill="none" stroke="#c0c3cc" stroke-width="1.600"/></svg>
<svg style="position:absolute;left:41px;top:562px;" width="16" height="16" viewBox="0 0 16 16"><path d="M14.280 8.550A6.300 6.300 0 119.950 2" fill="none" stroke="#60b667" stroke-width="1.400"/><path d="M5.200 8.200L7.300 10.300L13.500 3.400" fill="none" stroke="#60b667" stroke-width="1.400"/></svg>
<span class="t" style="top:561.10px;font-size:12px;color:#cfd3dd;left:60.30px;letter-spacing:-0.294px;">courses.tests.test_all_videos.All_videos_Premiere</span>
<span class="t" style="top:560.00px;font-size:11px;color:#717581;left:547.84px;letter-spacing:-0.449px;">15 ms</span>
<svg style="position:absolute;left:22.5px;top:584px;" width="12" height="12" viewBox="0 0 12 12"><path d="M3.200 1.800L7.600 6L3.200 10.200" fill="none" stroke="#c0c3cc" stroke-width="1.600"/></svg>
<svg style="position:absolute;left:41px;top:582px;" width="16" height="16" viewBox="0 0 16 16"><path d="M14.280 8.550A6.300 6.300 0 119.950 2" fill="none" stroke="#60b667" stroke-width="1.400"/><path d="M5.200 8.200L7.300 10.300L13.500 3.400" fill="none" stroke="#60b667" stroke-width="1.400"/></svg>
<span class="t" style="top:581.10px;font-size:12px;color:#cfd3dd;left:60.30px;letter-spacing:-0.336px;">courses.tests.test_all_videos.All_videos_Sciences</span>
<span class="t" style="top:580.00px;font-size:11px;color:#717581;left:547.84px;letter-spacing:-0.449px;">15 ms</span>
<svg style="position:absolute;left:22.5px;top:604px;" width="12" height="12" viewBox="0 0 12 12"><path d="M3.200 1.800L7.600 6L3.200 10.200" fill="none" stroke="#c0c3cc" stroke-width="1.600"/></svg>
<svg style="position:absolute;left:41px;top:602px;" width="16" height="16" viewBox="0 0 16 16"><path d="M14.280 8.550A6.300 6.300 0 119.950 2" fill="none" stroke="#60b667" stroke-width="1.400"/><path d="M5.200 8.200L7.300 10.300L13.500 3.400" fill="none" stroke="#60b667" stroke-width="1.400"/></svg>
<span class="t" style="top:601.10px;font-size:12px;color:#cfd3dd;left:60.30px;letter-spacing:-0.254px;">courses.tests.test_all_videos.All_videos_Terminale</span>
<span class="t" style="top:600.00px;font-size:11px;color:#717581;left:547.84px;letter-spacing:-0.449px;">22 ms</span>
<svg style="position:absolute;left:22.5px;top:624px;" width="12" height="12" viewBox="0 0 12 12"><path d="M3.200 1.800L7.600 6L3.200 10.200" fill="none" stroke="#c0c3cc" stroke-width="1.600"/></svg>
<svg style="position:absolute;left:41px;top:622px;" width="16" height="16" viewBox="0 0 16 16"><path d="M14.280 8.550A6.300 6.300 0 119.950 2" fill="none" stroke="#60b667" stroke-width="1.400"/><path d="M5.200 8.200L7.300 10.300L13.500 3.400" fill="none" stroke="#60b667" stroke-width="1.400"/></svg>
<span class="t" style="top:621.10px;font-size:12px;color:#cfd3dd;left:60.30px;letter-spacing:-0.273px;">courses.tests.test_all_videos.All_videos_no_video</span>
<span class="t" style="top:620.00px;font-size:11px;color:#717581;left:547.84px;letter-spacing:-0.449px;">15 ms</span>
<svg style="position:absolute;left:22.5px;top:644px;" width="12" height="12" viewBox="0 0 12 12"><path d="M3.200 1.800L7.600 6L3.200 10.200" fill="none" stroke="#c0c3cc" stroke-width="1.600"/></svg>
<svg style="position:absolute;left:41px;top:642px;" width="16" height="16" viewBox="0 0 16 16"><path d="M14.280 8.550A6.300 6.300 0 119.950 2" fill="none" stroke="#60b667" stroke-width="1.400"/><path d="M5.200 8.200L7.300 10.300L13.500 3.400" fill="none" stroke="#60b667" stroke-width="1.400"/></svg>
<span class="t" style="top:641.10px;font-size:12px;color:#cfd3dd;left:60.30px;letter-spacing:-0.274px;">courses.tests.test_infos.Cours_Canceled</span>
<span class="t" style="top:640.00px;font-size:11px;color:#717581;left:547.84px;letter-spacing:-0.449px;">45 ms</span>
<svg style="position:absolute;left:22.5px;top:664px;" width="12" height="12" viewBox="0 0 12 12"><path d="M3.200 1.800L7.600 6L3.200 10.200" fill="none" stroke="#c0c3cc" stroke-width="1.600"/></svg>
<svg style="position:absolute;left:41px;top:662px;" width="16" height="16" viewBox="0 0 16 16"><path d="M14.280 8.550A6.300 6.300 0 119.950 2" fill="none" stroke="#60b667" stroke-width="1.400"/><path d="M5.200 8.200L7.300 10.300L13.500 3.400" fill="none" stroke="#60b667" stroke-width="1.400"/></svg>
<span class="t" style="top:661.10px;font-size:12px;color:#cfd3dd;left:60.30px;letter-spacing:-0.326px;">courses.tests.test_infos.Cours_Exceed</span>
<span class="t" style="top:660.00px;font-size:11px;color:#717581;left:547.84px;letter-spacing:-0.449px;">37 ms</span>
<svg style="position:absolute;left:22.5px;top:684px;" width="12" height="12" viewBox="0 0 12 12"><path d="M3.200 1.800L7.600 6L3.200 10.200" fill="none" stroke="#c0c3cc" stroke-width="1.600"/></svg>
<svg style="position:absolute;left:41px;top:682px;" width="16" height="16" viewBox="0 0 16 16"><path d="M14.280 8.550A6.300 6.300 0 119.950 2" fill="none" stroke="#60b667" stroke-width="1.400"/><path d="M5.200 8.200L7.300 10.300L13.500 3.400" fill="none" stroke="#60b667" stroke-width="1.400"/></svg>
<span class="t" style="top:681.10px;font-size:12px;color:#cfd3dd;left:60.30px;letter-spacing:-0.194px;">courses.tests.test_infos.Cours_disponible</span>
<span class="t" style="top:680.00px;font-size:11px;color:#717581;left:547.84px;letter-spacing:-0.449px;">30 ms</span>
<svg style="position:absolute;left:22.5px;top:704px;" width="12" height="12" viewBox="0 0 12 12"><path d="M3.200 1.800L7.600 6L3.200 10.200" fill="none" stroke="#c0c3cc" stroke-width="1.600"/></svg>
<svg style="position:absolute;left:41px;top:702px;" width="16" height="16" viewBox="0 0 16 16"><path d="M14.280 8.550A6.300 6.300 0 119.950 2" fill="none" stroke="#60b667" stroke-width="1.400"/><path d="M5.200 8.200L7.300 10.300L13.500 3.400" fill="none" stroke="#60b667" stroke-width="1.400"/></svg>
<span class="t" style="top:701.10px;font-size:12px;color:#cfd3dd;left:60.30px;letter-spacing:-0.208px;">courses.tests.test_infos.Cours_limites</span>
<span class="t" style="top:700.00px;font-size:11px;color:#717581;left:547.84px;letter-spacing:-0.449px;">36 ms</span>
<svg style="position:absolute;left:22.5px;top:724px;" width="12" height="12" viewBox="0 0 12 12"><path d="M3.200 1.800L7.600 6L3.200 10.200" fill="none" stroke="#c0c3cc" stroke-width="1.600"/></svg>
<svg style="position:absolute;left:41px;top:722px;" width="16" height="16" viewBox="0 0 16 16"><path d="M14.280 8.550A6.300 6.300 0 119.950 2" fill="none" stroke="#60b667" stroke-width="1.400"/><path d="M5.200 8.200L7.300 10.300L13.500 3.400" fill="none" stroke="#60b667" stroke-width="1.400"/></svg>
<span class="t" style="top:721.10px;font-size:12px;color:#cfd3dd;left:60.30px;letter-spacing:-0.335px;">courses.tests.test_infos.Cours_pas_reservable</span>
<span class="t" style="top:720.00px;font-size:11px;color:#717581;left:547.84px;letter-spacing:-0.449px;">45 ms</span>
<svg style="position:absolute;left:22.5px;top:744px;" width="12" height="12" viewBox="0 0 12 12"><path d="M3.200 1.800L7.600 6L3.200 10.200" fill="none" stroke="#c0c3cc" stroke-width="1.600"/></svg>
<svg style="position:absolute;left:41px;top:742px;" width="16" height="16" viewBox="0 0 16 16"><path d="M14.280 8.550A6.300 6.300 0 119.950 2" fill="none" stroke="#60b667" stroke-width="1.400"/><path d="M5.200 8.200L7.300 10.300L13.500 3.400" fill="none" stroke="#60b667" stroke-width="1.400"/></svg>
<span class="t" style="top:741.10px;font-size:12px;color:#cfd3dd;left:60.30px;letter-spacing:-0.208px;">courses.tests.test_infos.Infos</span>
<span class="t" style="top:740.00px;font-size:11px;color:#717581;left:547.84px;letter-spacing:-0.449px;">30 ms</span>
<svg style="position:absolute;left:22.5px;top:764px;" width="12" height="12" viewBox="0 0 12 12"><path d="M3.200 1.800L7.600 6L3.200 10.200" fill="none" stroke="#c0c3cc" stroke-width="1.600"/></svg>
<svg style="position:absolute;left:41px;top:762px;" width="16" height="16" viewBox="0 0 16 16"><path d="M14.280 8.550A6.300 6.300 0 119.950 2" fill="none" stroke="#60b667" stroke-width="1.400"/><path d="M5.200 8.200L7.300 10.300L13.500 3.400" fill="none" stroke="#60b667" stroke-width="1.400"/></svg>
<span class="t" style="top:761.10px;font-size:12px;color:#cfd3dd;left:60.30px;letter-spacing:-0.312px;">courses.tests.test_infos.Infos_LIVE_medecine</span>
<span class="t" style="top:760.00px;font-size:11px;color:#717581;left:547.84px;letter-spacing:-0.449px;">66 ms</span>
<svg style="position:absolute;left:22.5px;top:784px;" width="12" height="12" viewBox="0 0 12 12"><path d="M3.200 1.800L7.600 6L3.200 10.200" fill="none" stroke="#c0c3cc" stroke-width="1.600"/></svg>
<svg style="position:absolute;left:41px;top:782px;" width="16" height="16" viewBox="0 0 16 16"><path d="M14.280 8.550A6.300 6.300 0 119.950 2" fill="none" stroke="#60b667" stroke-width="1.400"/><path d="M5.200 8.200L7.300 10.300L13.500 3.400" fill="none" stroke="#60b667" stroke-width="1.400"/></svg>
<span class="t" style="top:781.10px;font-size:12px;color:#cfd3dd;left:60.30px;letter-spacing:-0.320px;">courses.tests.test_infos.Infos_LIVE_premiere</span>
<span class="t" style="top:780.00px;font-size:11px;color:#717581;left:547.84px;letter-spacing:-0.449px;">92 ms</span>
<svg style="position:absolute;left:22.5px;top:804px;" width="12" height="12" viewBox="0 0 12 12"><path d="M3.200 1.800L7.600 6L3.200 10.200" fill="none" stroke="#c0c3cc" stroke-width="1.600"/></svg>
<svg style="position:absolute;left:41px;top:802px;" width="16" height="16" viewBox="0 0 16 16"><path d="M14.280 8.550A6.300 6.300 0 119.950 2" fill="none" stroke="#60b667" stroke-width="1.400"/><path d="M5.200 8.200L7.300 10.300L13.500 3.400" fill="none" stroke="#60b667" stroke-width="1.400"/></svg>
<span class="t" style="top:801.10px;font-size:12px;color:#cfd3dd;left:60.30px;letter-spacing:-0.265px;">courses.tests.test_infos.Infos_LIVE_scientifique</span>
<span class="t" style="top:800.00px;font-size:11px;color:#717581;left:547.84px;letter-spacing:-0.449px;">72 ms</span>
<svg style="position:absolute;left:22.5px;top:824px;" width="12" height="12" viewBox="0 0 12 12"><path d="M3.200 1.800L7.600 6L3.200 10.200" fill="none" stroke="#c0c3cc" stroke-width="1.600"/></svg>
<svg style="position:absolute;left:41px;top:822px;" width="16" height="16" viewBox="0 0 16 16"><path d="M14.280 8.550A6.300 6.300 0 119.950 2" fill="none" stroke="#60b667" stroke-width="1.400"/><path d="M5.200 8.200L7.300 10.300L13.500 3.400" fill="none" stroke="#60b667" stroke-width="1.400"/></svg>
<span class="t" style="top:821.10px;font-size:12px;color:#cfd3dd;left:60.30px;letter-spacing:-0.290px;">courses.tests.test_infos.Infos_LIVE_terminale</span>
<span class="t" style="top:820.00px;font-size:11px;color:#717581;left:547.84px;letter-spacing:-0.449px;">90 ms</span>
<svg style="position:absolute;left:22.5px;top:844px;" width="12" height="12" viewBox="0 0 12 12"><path d="M3.200 1.800L7.600 6L3.200 10.200" fill="none" stroke="#c0c3cc" stroke-width="1.600"/></svg>
<svg style="position:absolute;left:41px;top:842px;" width="16" height="16" viewBox="0 0 16 16"><path d="M14.280 8.550A6.300 6.300 0 119.950 2" fill="none" stroke="#60b667" stroke-width="1.400"/><path d="M5.200 8.200L7.300 10.300L13.500 3.400" fill="none" stroke="#60b667" stroke-width="1.400"/></svg>
<span class="t" style="top:841.10px;font-size:12px;color:#cfd3dd;left:60.30px;letter-spacing:-0.272px;">courses.tests.test_infos.Infos_VOD_medecine</span>
<span class="t" style="top:840.00px;font-size:11px;color:#717581;left:547.84px;letter-spacing:-0.449px;">70 ms</span>
<div style="position:absolute;left:585px;top:1px;width:8px;height:710px;background:rgba(120,122,128,0.45);"></div>
</div>
<div style="position:absolute;left:645px;top:144px;width:1px;height:852px;background:#343842;"></div>
<div style="position:absolute;left:646px;top:144px;width:1224px;height:852px;background:#282c35;"></div>
<pre style="position:absolute;left:659px;top:387.600px;transform-origin:0 0;transform:scaleY(1.100);margin:0;font-family:'Liberation Mono', monospace;font-size:13.333px;line-height:20px;color:#e2556d;letter-spacing:0;-webkit-text-stroke:0.180px #e2556d;">09:48:04 | Handler - Courses    | 151  | DEBUG    | Debut de la tâche de mise à jour du cours.
09:48:04 | Handler - Courses    | 163  | DEBUG    | Cours unique : 1
09:48:04 | Handler - Courses    | 151  | DEBUG    | Debut de la tâche de mise à jour du cours.
09:48:04 | Handler - Courses    | 163  | DEBUG    | Cours unique : 1
09:48:04 | Handler - Courses    | 151  | DEBUG    | Debut de la tâche de mise à jour du cours.
09:48:04 | Handler - Courses    | 163  | DEBUG    | Cours unique : 1
09:48:04 | Scheduler - Runner   | 122  | DEBUG    | Start a task : 1
09:48:04 | Scheduler - Runner   | 113  | DEBUG    | Action : MAIL_SEND_A_MAIL
09:48:04 | Scheduler - Runner   | 114  | DEBUG    | Try : 0
09:48:04 | Scheduler - Runner   | 115  | DEBUG    | Période : 5
09:48:04 | Scheduler - Runner   | 116  | DEBUG    | Date next : 2022-04-02 09:48:04.922611+02:00
09:48:04 | Scheduler - Runner   | 117  | DEBUG    | Date expiration : 2022-04-03 09:48:04.922611+02:00
09:48:04 | Handler - Mail       | 35   | DEBUG    | Sending mail to : recipient@mail.fr
09:48:04 | Handler - Mail       | 36   | DEBUG    | Subject : sujet
09:48:04 | Handler - Mail       | 50   | DEBUG    | HTML : True
09:48:04 | Handler - Mail       | 55   | DEBUG    | LOGO : True
09:48:04 | Handler - Mail       | 60   | DEBUG    | FILE ATTACH : True





09:48:04 | Scheduler - Runner   | 130  | DEBUG    | Task successful : 1 -&gt; None</pre>
<div style="position:absolute;left:0px;top:996px;width:1920px;height:1px;background:#343842;"></div>
<div style="position:absolute;left:0px;top:997px;width:1920px;height:22px;background:#21232c;"></div>
<div style="position:absolute;left:72px;top:997px;width:56px;height:22px;background:#393d49;"></div>
<div style="position:absolute;left:0px;top:1019px;width:1920px;height:1px;background:#343842;"></div>
<div style="position:absolute;left:0px;top:1020px;width:1920px;height:20px;background:#21232c;"></div>
<svg style="position:absolute;left:30.5px;top:1001.5px;" width="13" height="13" viewBox="0 0 16 16"><circle cx="4.500" cy="3.500" r="1.600" fill="none" stroke="#4aa8e0" stroke-width="1.300"/><circle cx="4.500" cy="12.500" r="1.600" fill="none" stroke="#4aa8e0" stroke-width="1.300"/><circle cx="11.500" cy="4.500" r="1.600" fill="none" stroke="#4aa8e0" stroke-width="1.300"/><path d="M4.500 5.100v5.800M11.500 6.100c0 3-7 2-7 4.800" fill="none" stroke="#4aa8e0" stroke-width="1.300"/></svg>
<span class="t" style="top:998.70px;font-size:12px;color:#cfd3dd;left:48.00px;letter-spacing:0.083px;">Git</span>
<svg style="position:absolute;left:83.5px;top:1003px;" width="10" height="10" viewBox="0 0 10 10"><path d="M1.500 1L9 5L1.500 9z" fill="#8fc96a"/></svg>
<span class="t" style="top:998.70px;font-size:12px;color:#cfd3dd;left:98.00px;letter-spacing:-0.257px;">Run</span>
<svg style="position:absolute;left:137.5px;top:1002px;" width="12" height="12" viewBox="0 0 12 12"><rect x="1" y="1" width="10" height="10" rx="1" fill="none" stroke="#c98a78" stroke-width="1.300"/><path d="M4 3h4v5.500L6 7.300 4 8.500z" fill="#c98a78"/></svg>
<span class="t" style="top:998.70px;font-size:12px;color:#cfd3dd;left:155.00px;letter-spacing:-0.649px;">TODO</span>
<svg style="position:absolute;left:206.5px;top:1001.5px;" width="13" height="13" viewBox="0 0 13 13"><path d="M3.500 11V8a3 3 0 016 0v3z" fill="#c5c8d0"/><path d="M2 11.300h9v1.500H2z" fill="#c5c8d0"/><path d="M6.500 1v2M2.300 2.800l1.300 1.400M10.700 2.800L9.400 4.200M0.500 6.500h1.700M12.500 6.500h-1.700" stroke="#c5c8d0" stroke-width="1"/></svg>
<span class="t" style="top:998.70px;font-size:12px;color:#cfd3dd;left:224.00px;letter-spacing:-0.455px;">Problems</span>
<svg style="position:absolute;left:292.5px;top:1002px;" width="12" height="12" viewBox="0 0 12 12"><rect x="0.500" y="1.500" width="11" height="9" rx="1" fill="#c07ab6"/><path d="M2.500 4l2 1.800-2 1.800M6 8h3" fill="none" stroke="#21232c" stroke-width="1"/></svg>
<span class="t" style="top:998.70px;font-size:12px;color:#cfd3dd;left:309.00px;letter-spacing:-0.121px;">Terminal</span>
<svg style="position:absolute;left:378px;top:1002px;" width="12" height="12" viewBox="0 0 12 12"><rect x="0.500" y="0.500" width="11" height="11" rx="1.500" fill="#f2b50f"/><path d="M2.500 8.500h4" stroke="#21232c" stroke-width="1.500"/></svg>
<span class="t" style="top:998.70px;font-size:12px;color:#cfd3dd;left:396.00px;letter-spacing:-0.492px;">Python Packages</span>
<span class="t" style="top:998.30px;font-size:10px;color:#efb85a;left:506.80px;font-weight:700;letter-spacing:-1.200px;">PY</span>
<span class="t" style="top:998.70px;font-size:12px;color:#cfd3dd;left:523.00px;letter-spacing:-0.248px;">Python Console</span>
<svg style="position:absolute;left:1821px;top:1002px;" width="13" height="13" viewBox="0 0 13 13"><path d="M6.500 1A5.500 5.500 0 106.500 12H12V6.500A5.500 5.500 0 006.500 1z" fill="none" stroke="#c5c8d0" stroke-width="1.300"/></svg>
<span class="t" style="top:998.70px;font-size:12px;color:#cfd3dd;left:1838.00px;letter-spacing:-0.505px;">Event Log</span>
<svg style="position:absolute;left:5px;top:1023px;" width="14" height="14" viewBox="0 0 14 14"><path d="M7 1.500L12.500 5L7 8.500L1.500 5z" fill="#ffffff"/><path d="M1.500 8L7 11.500L12.500 8" fill="none" stroke="#ffffff" stroke-width="1.300"/></svg>
<span class="t" style="top:1019.70px;font-size:12px;color:#cfd3dd;left:27.00px;letter-spacing:-0.209px;">Tests passed: 263 (moments ago)</span>
<svg style="position:absolute;left:1544px;top:1021px;" width="18" height="18" viewBox="0 0 18 18"><path d="M4.500 13a3.500 3.500 0 01-.3-7A4.800 4.800 0 0113.500 6.500a3.200 3.200 0 01.500 6.300z" fill="#9a9ca4"/><circle cx="13" cy="13.500" r="2.800" fill="#21232c"/><circle cx="13" cy="13.500" r="1.800" fill="none" stroke="#c5c8d0" stroke-width="1.400" stroke-dasharray="1.100 0.800"/></svg>
<span class="t" style="top:1019.70px;font-size:12px;color:#cfd3dd;left:1571.00px;letter-spacing:-0.194px;">Python 3.10 (sciences-physiques_app)</span>
<svg style="position:absolute;left:1782.5px;top:1022.5px;" width="15" height="15" viewBox="0 0 16 16"><circle cx="4.500" cy="3.500" r="1.600" fill="none" stroke="#4fc0f2" stroke-width="1.300"/><circle cx="4.500" cy="12.500" r="1.600" fill="none" stroke="#4fc0f2" stroke-width="1.300"/><circle cx="11.500" cy="4.500" r="1.600" fill="none" stroke="#4fc0f2" stroke-width="1.300"/><path d="M4.500 5.100v5.800M11.500 6.100c0 3-7 2-7 4.800" fill="none" stroke="#4fc0f2" stroke-width="1.300"/></svg>
<span class="t" style="top:1019.70px;font-size:12px;color:#cfd3dd;left:1801.00px;letter-spacing:0.163px;">main</span>
<div style="position:absolute;left:1832px;top:1020px;width:17px;height:19px;background:#747474;"></div>
<div style="position:absolute;left:1849px;top:1020px;width:5px;height:19px;background:#5b5b5b;"></div>
<span class="t" style="top:1019.70px;font-size:12px;color:#b9bcc6;left:1838.00px;letter-spacing:-0.308px;">439 of 2040M</span>
<div style="position:absolute;left:0px;top:1040px;width:1920px;height:40px;background:#003399;"></div>
<div style="position:absolute;left:247px;top:1040px;width:48px;height:40px;background:#0a40a8;"></div>
<div style="position:absolute;left:55px;top:1078px;width:40px;height:2px;background:#a6bdf2;"></div>
<div style="position:absolute;left:153px;top:1078px;width:40px;height:2px;background:#a6bdf2;"></div>
<div style="position:absolute;left:202px;top:1078px;width:40px;height:2px;background:#a6bdf2;"></div>
<div style="position:absolute;left:247px;top:1078px;width:48px;height:2px;background:#a6bdf2;"></div>
<svg style="position:absolute;left:16px;top:1052px;" width="16" height="16" viewBox="0 0 16 16"><path d="M0 2.300L6.500 1.400V7.600H0zM7.300 1.300L16 0v7.600H7.300zM0 8.400h6.500v6.200L0 13.700zM7.300 8.400H16V16l-8.700-1.300z" fill="#ffffff"/></svg>
<svg style="position:absolute;left:61.25px;top:1045.55px;" width="27.5" height="27.5" viewBox="0 0 24 24"><defs><radialGradient id="ffg" cx="0.600" cy="0.200" r="0.900"><stop offset="0" stop-color="#ffe03a"/><stop offset="0.450" stop-color="#ff8a1e"/><stop offset="0.850" stop-color="#f0304a"/><stop offset="1" stop-color="#c0208a"/></radialGradient></defs><path d="M12 3.500c1-1.500 2.200-2.500 2.700-2.800.3 1.700 1.500 2.700 3.300 4.300 2.300 2 4 4.500 4 8A10 10 0 012 13c0-2.500.800-4.600 2-6 .100 1 .400 1.700.800 2.200C5.300 6.500 7.500 4 10 3.500c.7.400 1.400.200 2 0z" fill="url(#ffg)"/><circle cx="11.800" cy="13" r="5" fill="#7a3fe0"/><path d="M7.200 11.500c1-2.300 4-3 6-1.500-2 .200-3 1.300-2.600 2.800.5 1.500 2.400 2 4 1.200-1 2.800-4.500 3.800-6.700 1.700-1.100-1.100-1.300-2.700-.7-4.200z" fill="#ff9a2a" opacity="0.950"/></svg>
<svg style="position:absolute;left:112px;top:1048px;" width="24" height="24" viewBox="0 0 24 24"><path d="M1.200 2.800h8.500l1.500 1.800H22.700v4H1.200z" fill="#e8a51c"/><path d="M1.200 5h21.500v14.800H1.200z" fill="#fbd75b"/><path d="M5.300 12.300h13.400v7.500H5.300z" fill="#3f94ea"/><path d="M5.300 12.300h13.400v2H5.300z" fill="#2f7fd8"/><path d="M9 16.300h6v3.500H9z" fill="#fbd75b"/></svg>
<svg style="position:absolute;left:160.6px;top:1047.8px;" width="24" height="24" viewBox="0 0 24 24"><circle cx="12" cy="12" r="11.400" fill="#ffffff"/><circle cx="12" cy="12" r="10.300" fill="#4c9426"/><circle cx="12" cy="6.300" r="3.600" fill="#f4f8f0"/><circle cx="12" cy="4.800" r="1" fill="#4c9426"/><path d="M10.300 8.500h3.400v10.300l-1.700 1.800-1.700-1.800v-1.600l1.200-1.100-1.200-1.100z" fill="#f4f8f0"/></svg>
<svg style="position:absolute;left:210.5px;top:1049px;" width="22" height="22" viewBox="0 0 22 22"><rect x="0.500" y="0.500" width="21" height="21" rx="3.500" fill="#e0443a"/><path d="M3 7l4 2.300L13 5.500M3 11l4 2.300 6-3.800M3 15l4 2.300 6-3.800" fill="none" stroke="#ffffff" stroke-width="1.500"/></svg>
<svg style="position:absolute;left:220.7px;top:1058.6px;" width="14" height="14" viewBox="0 0 13 13"><circle cx="6.500" cy="6.500" r="7" fill="#2a2450" fill-opacity="0.920"/></svg>
<span class="t" style="top:1056.20px;font-size:11.5px;color:#f6e4e4;left:224.70px;font-weight:700;">5</span>
<svg style="position:absolute;left:258.5px;top:1047.5px;" width="25" height="25" viewBox="0 0 26 26"><path d="M2 5L13 0.500L24 4l1.500 12L19 25.500 5 24 0.500 15z" fill="#21d789"/><path d="M17 1.800L24 4l1.500 12L21 22z" fill="#fcf84a"/><path d="M20 8l4.500-1.500L25.500 16 23 19.500z" fill="#07c3f2"/><rect x="5" y="5" width="16" height="16" fill="#000000"/><path d="M7 18h6" stroke="#ffffff" stroke-width="1.300"/></svg>
<span class="t" style="top:1047.30px;font-size:8.5px;color:#ffffff;left:264.30px;font-weight:700;letter-spacing:-0.308px;">PC</span>
<svg style="position:absolute;left:1718px;top:1053px;" width="14" height="14" viewBox="0 0 14 14"><path d="M1 10l6-6 6 6" fill="none" stroke="#ffffff" stroke-width="1.300"/></svg>
<svg style="position:absolute;left:1740px;top:1051.5px;" width="18" height="18" viewBox="0 0 18 18"><rect x="3.500" y="1.500" width="13.500" height="9.500" fill="none" stroke="#ffffff" stroke-width="1.100"/><path d="M1.500 1.500h4v3.500h-4zM3.500 5v9.500M3.500 14.500h10M9.500 11v3.500" fill="none" stroke="#ffffff" stroke-width="1.100"/></svg>
<svg style="position:absolute;left:1764px;top:1051px;" width="18" height="18" viewBox="0 0 18 18"><path d="M4.500 13.500a3.500 3.500 0 01.300-7 5 5 0 019.200 1.300 3 3 0 01-.500 5.700z" fill="#e8ecf6"/><path d="M6 6.800A5 5 0 0114 7.800a3 3 0 011.500.700L9 11z" fill="#9db4e0"/></svg>
<svg style="position:absolute;left:1789.25px;top:1052.55px;" width="15.5" height="15.5" viewBox="0 0 18 18"><path d="M1.500 6.500h3L9 2.500v13l-4.500-4h-3z" fill="none" stroke="#ffffff" stroke-width="1.100"/><path d="M11 6.500a3.500 3.500 0 010 5M13 4.500a6.300 6.300 0 010 9" fill="none" stroke="#ffffff" stroke-width="1.100"/><path d="M15 2.800a8.800 8.800 0 010 12.400" fill="none" stroke="#8fa8e0" stroke-width="1"/></svg>
<span class="t" style="top:1041.70px;font-size:12px;color:#ffffff;left:1815.00px;letter-spacing:-1.200px;">ENG</span>
<span class="t" style="top:1059.70px;font-size:12px;color:#ffffff;left:1820.00px;letter-spacing:-1.200px;">FR</span>
<span class="t" style="top:1041.20px;font-size:12px;color:#ffffff;left:1866.00px;letter-spacing:-0.632px;">09:48</span>
<span class="t" style="top:1059.70px;font-size:12px;color:#ffffff;left:1851.00px;letter-spacing:-0.284px;">02/04/2022</span>
<div style="position:absolute;left:1915px;top:1040px;width:1px;height:40px;background:#5a7ac8;"></div>
</body></html>
